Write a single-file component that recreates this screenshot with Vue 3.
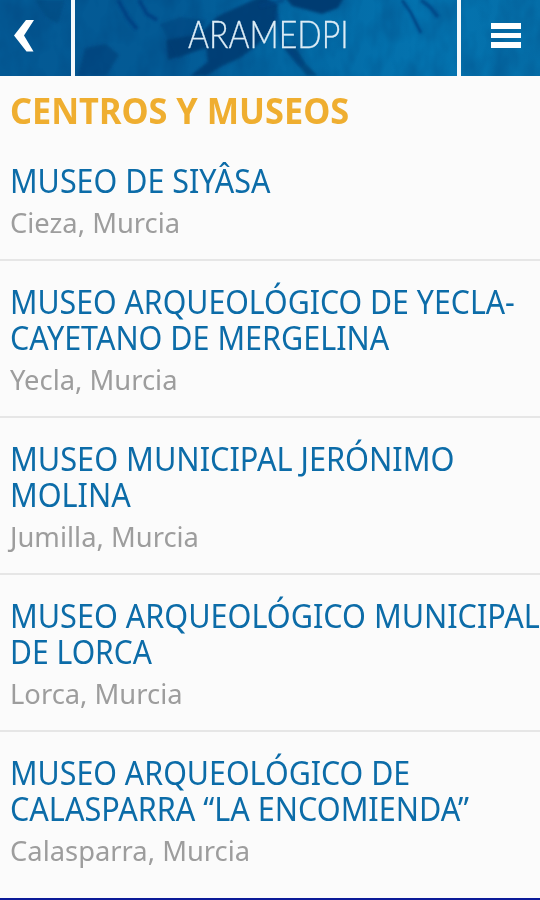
<script setup>
const museums = [
  { lines: [['MUSEO DE SIYÂSA', 0.937]], place: 'Cieza, Murcia' },
  { lines: [['MUSEO ARQUEOLÓGICO DE YECLA-', 0.931], ['CAYETANO DE MERGELINA', 0.938]], place: 'Yecla, Murcia' },
  { lines: [['MUSEO MUNICIPAL JERÓNIMO', 0.944], ['MOLINA', 0.94]], place: 'Jumilla, Murcia' },
  { lines: [['MUSEO ARQUEOLÓGICO MUNICIPAL', 0.941], ['DE LORCA', 0.925]], place: 'Lorca, Murcia' },
  { lines: [['MUSEO ARQUEOLÓGICO DE', 0.934], ['CALASPARRA “LA ENCOMIENDA”', 0.941]], place: 'Calasparra, Murcia' },
]
</script>

<template>
  <div class="screen">
    <header class="bar">
      <svg class="texture" width="540" height="76" viewBox="0 0 540 76" preserveAspectRatio="none">
        <defs>
          <linearGradient id="sea" x1="0" x2="1">
            <stop offset="0" stop-color="#045a95" />
            <stop offset=".33" stop-color="#035a95" />
            <stop offset=".55" stop-color="#0369a4" />
            <stop offset=".8" stop-color="#0474b0" />
            <stop offset="1" stop-color="#056ea8" />
          </linearGradient>
          <filter id="soft" x="-20%" y="-20%" width="140%" height="140%"><feGaussianBlur stdDeviation="1.8" /></filter>
          <filter id="fine" x="-10%" y="-10%" width="120%" height="120%"><feGaussianBlur stdDeviation=".8" /></filter>
          <filter id="grain" x="0" y="0" width="100%" height="100%" color-interpolation-filters="sRGB">
            <feTurbulence type="fractalNoise" baseFrequency=".045 .025" numOctaves="3" seed="8" />
            <feColorMatrix values="0 0 0 0 0  0 0 0 0 .2  0 0 0 0 .42  1.5 0 0 0 -.55" />
          </filter>
        </defs>
        <rect width="540" height="76" fill="url(#sea)" />
        <rect width="540" height="76" filter="url(#grain)" opacity=".35" />
        <g filter="url(#soft)" fill="#003a70">
          <path d="M218 16L240 6L262 -4L278 4L276 25L256 46L240 58L222 66L206 76H190L208 62L206 48L168 60L166 40L200 34Z" opacity=".85" />
          <path d="M284 -4H345L338 8L322 14L307 10L292 6Z" opacity=".95" />
          <path d="M85 48L106 44L119 55L106 76H78Z" opacity=".5" />
          <path d="M160 24L180 17L206 20L195 50L178 60Z" opacity=".4" />
          <path d="M35 0H65L58 24L46 17Z" opacity=".35" />
          <path d="M284 48L294 45L306 64L318 76H307Z" opacity=".7" />
        </g>
        <g filter="url(#fine)" fill="none" stroke="#003f80" stroke-width="4">
          <path d="M118 0L128 18L137 29M139 0L147 14L157 20" opacity=".75" />
          <path d="M402 0L411 13L421 33" stroke-width="3" opacity=".8" />
          <path d="M421 0L430 7L438 17" opacity=".7" />
          <path d="M276 12L282 43L302 64M260 6L284 0" opacity=".5" />
        </g>
      </svg>
      <button class="cell" aria-label="Atrás">
        <svg class="back" width="22" height="36" viewBox="0 0 22 36">
          <path d="M13 2H21L11 17.5L20.5 33.5H13.5L1 17.5Z" fill="#fff" />
        </svg>
      </button>
      <h1 class="brand"><span>ARAMEDPI</span></h1>
      <button class="cell menu" aria-label="Menú">
        <i></i><i></i><i></i>
      </button>
    </header>
    <main>
      <h2 class="heading"><span>CENTROS Y MUSEOS</span></h2>
      <article v-for="m in museums" :key="m.place" class="row">
        <h3 class="title">
          <span v-for="[text, stretch] in m.lines" :key="text" :style="{ transform: `scaleX(${stretch})` }">{{ text }}</span>
        </h3>
        <p class="place"><span>{{ m.place }}</span></p>
      </article>
    </main>
    <footer class="edge"></footer>
  </div>
</template>

<style>
body { margin: 0; background: #fbfbfb; }
</style>

<style scoped>
* { box-sizing: border-box; }
.screen {
  width: 540px; height: 900px; overflow: hidden;
  display: flex; flex-direction: column;
  background: #fbfbfb;
  font-family: "Noto Sans", "Open Sans", sans-serif;
}
.bar {
  position: relative; isolation: isolate; flex: none;
  height: 76px; display: grid; grid-template-columns: 71px 1fr 79px;
}
.texture { position: absolute; inset: 0; z-index: -1; }
.cell {
  appearance: none; border: 0; padding: 0; margin: 0; background: none;
  display: flex; align-items: flex-start; justify-content: flex-start;
}
.back { display: block; margin: 18px 0 0 13px; }
.brand {
  margin: 0; border: solid #f5f9fc; border-width: 0 4px;
  font: 300 38px/66px Lato, sans-serif; color: #dcecf6;
  padding-left: 113px; white-space: nowrap;
  -webkit-text-stroke: .3px #dcecf6;
}
.brand span { display: inline-block; transform: scaleX(.845); transform-origin: 0 50%; }
.menu { flex-direction: column; gap: 4px; padding: 23px 0 0 30px; }
.menu i { width: 30px; height: 5.5px; background: #fff; }
main { flex: 1; min-height: 0; }
.heading {
  margin: 0; padding: 10px 10px 0; height: 64px;
  font-size: 35px; line-height: 50px; font-weight: 700; color: #efae30; white-space: nowrap;
}
.heading span, .title span, .place span { display: block; width: max-content; transform-origin: 0 50%; }
.heading span { transform: scaleX(.98); }
.row { padding: 23px 10px 0; height: 157px; border-bottom: 2px solid #e6e6e6; }
.row:nth-of-type(1) { height: 121px; }
.row:last-child { border-bottom: 0; }
.title { margin: 0; font-size: 32.5px; line-height: 36.4px; font-weight: 400; color: #0c6ca8; white-space: nowrap; }
.place { margin: 1.6px 0 0; font-size: 28px; line-height: 42px; color: #9d9d9d; }
.place span { transform: scaleX(.977); }
.edge { flex: none; height: 2px; background: #0b1a98; }
</style>
